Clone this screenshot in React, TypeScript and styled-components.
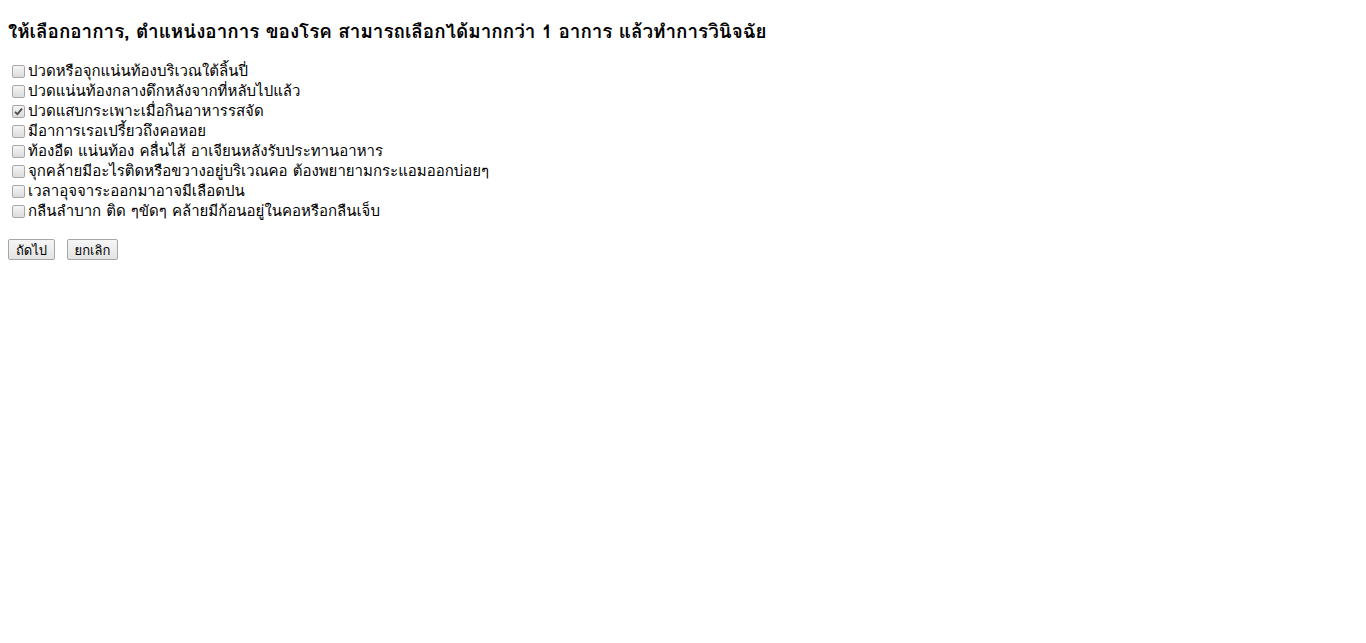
import React, { useState } from "react";
import styled, { createGlobalStyle } from "styled-components";

const GlobalStyle = createGlobalStyle`
  body {
    margin: 8px;
    background: #ffffff;
    color: #000000;
    font-family: "Loma", "Noto Sans Thai Looped", "Liberation Sans", sans-serif;
  }
`;

const Form = styled.form`
  display: flex;
  flex-direction: column;
`;

const Title = styled.h3`
  margin: 11px 0 18px;
  font-size: 18.85px;
  font-weight: bold;
  line-height: 24px;
`;

const SymptomList = styled.div`
  display: flex;
  flex-direction: column;
`;

const SymptomRow = styled.label`
  display: flex;
  align-items: center;
  height: 20px;
  font-size: 15px;
  line-height: 20px;
  cursor: default;
`;

const HiddenInput = styled.input`
  position: absolute;
  opacity: 0;
  width: 0;
  height: 0;
  margin: 0;
`;

const Box = styled.span<{ $checked: boolean }>`
  display: flex;
  align-items: center;
  justify-content: center;
  box-sizing: border-box;
  width: 13px;
  height: 13px;
  margin: 0 3px 0 4px;
  border: 1px solid #a8a8a8;
  border-radius: 2px;
  background: linear-gradient(#f4f4f4, #dcdcdc);
  flex-shrink: 0;
  color: ${(p) => (p.$checked ? "#4a4a4a" : "transparent")};
`;

const Actions = styled.div`
  display: flex;
  gap: 12px;
  margin-top: 18px;
`;

const Button = styled.button<{ $width: number }>`
  box-sizing: border-box;
  width: ${(p) => p.$width}px;
  height: 21px;
  padding: 0;
  font-family: inherit;
  font-size: 13px;
  color: #000;
  background: linear-gradient(#f6f6f6, #e3e3e3);
  border: 1px solid #a6a6a6;
  border-radius: 2px;
`;

const symptoms = [
  "ปวดหรือจุกแน่นท้องบริเวณใต้ลิ้นปี่",
  "ปวดแน่นท้องกลางดึกหลังจากที่หลับไปแล้ว",
  "ปวดแสบกระเพาะเมื่อกินอาหารรสจัด",
  "มีอาการเรอเปรี้ยวถึงคอหอย",
  "ท้องอืด แน่นท้อง คลื่นไส้ อาเจียนหลังรับประทานอาหาร",
  "จุกคล้ายมีอะไรติดหรือขวางอยู่บริเวณคอ ต้องพยายามกระแอมออกบ่อยๆ",
  "เวลาอุจจาระออกมาอาจมีเลือดปน",
  "กลืนลำบาก ติด ๆขัดๆ คล้ายมีก้อนอยู่ในคอหรือกลืนเจ็บ",
];

export default function App() {
  const [checked, setChecked] = useState<boolean[]>(symptoms.map((_, i) => i === 2));

  return (
    <>
      <GlobalStyle />
      <Form onSubmit={(e) => e.preventDefault()}>
        <Title>ให้เลือกอาการ, ตำแหน่งอาการ ของโรค สามารถเลือกได้มากกว่า 1 อาการ แล้วทำการวินิจฉัย</Title>
        <SymptomList>
          {symptoms.map((s, i) => (
            <SymptomRow key={s}>
              <HiddenInput
                type="checkbox"
                checked={checked[i]}
                onChange={() => setChecked(checked.map((c, j) => (j === i ? !c : c)))}
              />
              <Box $checked={checked[i]}>
                <svg width="9" height="9" viewBox="0 0 9 9">
                  <path d="M1 4.8 L3.4 7.2 L8 1.6" fill="none" stroke="currentColor" strokeWidth="1.8" />
                </svg>
              </Box>
              {s}
            </SymptomRow>
          ))}
        </SymptomList>
        <Actions>
          <Button type="submit" $width={47}>ถัดไป</Button>
          <Button type="button" $width={51}>ยกเลิก</Button>
        </Actions>
      </Form>
    </>
  );
}
